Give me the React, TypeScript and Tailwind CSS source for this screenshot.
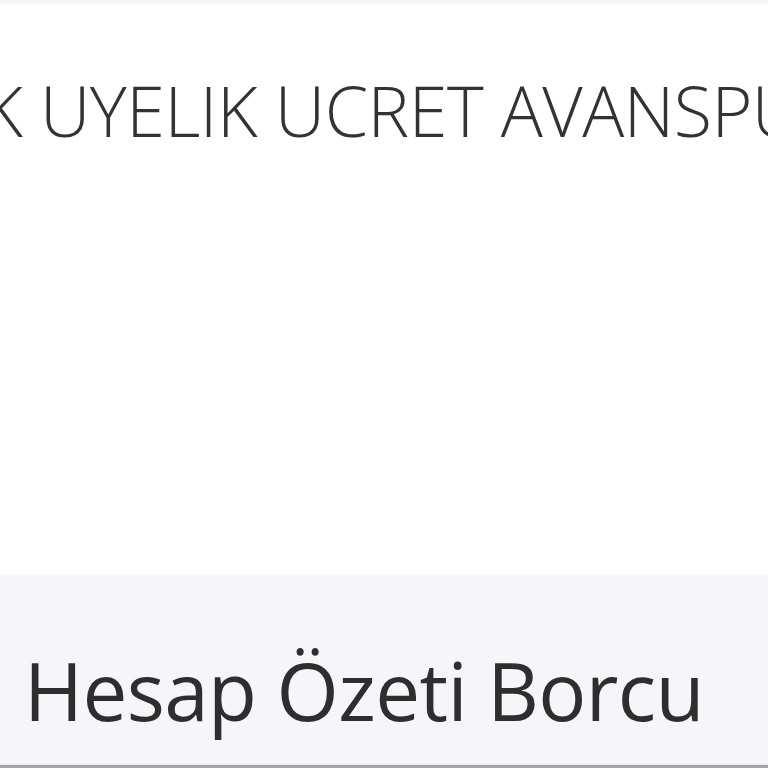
import React from "react";

export default function App() {
  return (
    <div className="w-[768px] h-[768px] overflow-hidden bg-white flex flex-col" style={{ fontFamily: '"Open Sans", "Noto Sans", sans-serif' }}>
      <div className="h-[6px] shrink-0 bg-gradient-to-b from-[#f1f1f1] to-white" />
      <div className="h-[569px] shrink-0 pt-[64px] overflow-hidden">
        <div className="flex whitespace-nowrap text-[70px] leading-[80px] font-light tracking-[-0.5px] text-[#333333]">
          <div className="w-[40px] shrink-0 flex justify-end overflow-hidden">
            <span>YILLIK&nbsp;</span>
          </div>
          <span>UYELIK UCRET AVANSPUAN</span>
        </div>
      </div>
      <div className="h-[189px] shrink-0 bg-[#f5f6f9] pl-[24px] pt-[71px] overflow-hidden">
        <div className="whitespace-nowrap text-[80px] leading-[88px] tracking-[-0.6px] text-[#2e2e2e]">Hesap Özeti Borcu</div>
      </div>
      <div className="h-[1px] shrink-0 bg-[#e8e8e8]" />
      <div className="h-[3px] shrink-0 bg-[#a3a3a3]" />
    </div>
  );
}
